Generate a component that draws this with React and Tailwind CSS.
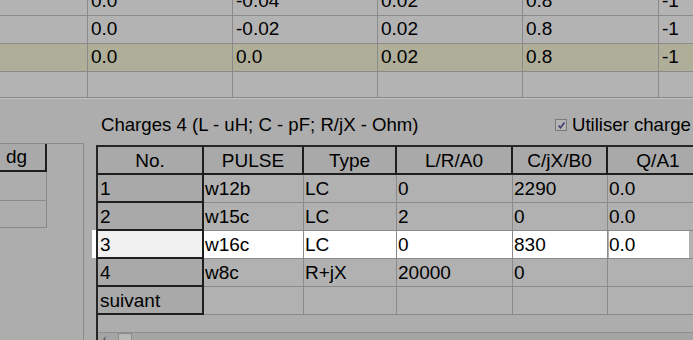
import React from 'react';

const topRows = [
  ['', '0.0', '-0.04', '0.02', '0.8', '-1'],
  ['', '0.0', '-0.02', '0.02', '0.8', '-1'],
  ['', '0.0', '0.0', '0.02', '0.8', '-1'],
  ['', '', '', '', '', ''],
];
const topWidths = ['w-[88px]', 'w-[145px]', 'w-[145px]', 'w-[145px]', 'w-[136px]', 'w-[60px]'];

const cols = [
  { label: 'No.', w: 'w-[106px]' },
  { label: 'PULSE', w: 'w-[100px]' },
  { label: 'Type', w: 'w-[93px]' },
  { label: 'L/R/A0', w: 'w-[116px]' },
  { label: 'C/jX/B0', w: 'w-[95px]' },
  { label: 'Q/A1', w: 'w-[102px]' },
];

const rows = [
  ['1', 'w12b', 'LC', '0', '2290', '0.0'],
  ['2', 'w15c', 'LC', '2', '0', '0.0'],
  ['3', 'w16c', 'LC', '0', '830', '0.0'],
  ['4', 'w8c', 'R+jX', '20000', '0', ''],
  ['suivant', '', '', '', '', ''],
];

function TopTable() {
  return (
    <div className="h-[98px] overflow-hidden bg-[#b3b3b3] border-b border-[#878787]">
      <div className="-mt-[12px]">
        {topRows.map((r, i) => (
          <div
            key={i}
            className={`flex h-[28px] border-b border-[#8a8a8a] ${i === 2 ? 'bg-[#afae98]' : ''}`}
          >
            {r.map((c, j) => (
              <div
                key={j}
                className={`${topWidths[j]} shrink-0 border-r border-[#8a8a8a] pl-[3px] pt-[1px] leading-[24px] text-[19px]`}
              >
                {c}
              </div>
            ))}
          </div>
        ))}
      </div>
    </div>
  );
}

function LeftPanel() {
  return (
    <div className="w-[84px] h-[200px] shrink-0 border-t border-r border-[#8a8a8a]">
      <div className="w-[47px] h-[28px] bg-[#a9a9a9] border-r-2 border-b-2 border-[#1e1e1e] pl-[6px] leading-[26px] text-[19px]">
        dg
      </div>
      <div className="w-[47px] h-[29px] border-r border-b border-[#8a8a8a]" />
      <div className="w-[47px] h-[27px] border-r border-b border-[#8a8a8a]" />
    </div>
  );
}

function ChargeTable() {
  return (
    <div className="relative flex-1 h-[200px] mt-[2px] border-l-2 border-t-2 border-[#262626]">
      <div className="flex h-[28px]">
        {cols.map((c) => (
          <div
            key={c.label}
            className={`${c.w} shrink-0 bg-[#a9a9a9] border-r-2 border-b-2 border-[#1e1e1e] text-center leading-[27px] text-[19px]`}
          >
            {c.label}
          </div>
        ))}
      </div>
      {rows.map((r, i) => {
        const sel = i === 2;
        return (
          <div key={i} className="flex h-[28px]">
            {r.map((c, j) => {
              const fixed = j === 0;
              let bg = fixed ? 'bg-[#a9a9a9]' : 'bg-[#b1b1b1]';
              if (sel) bg = fixed ? 'bg-[#f0f0f0]' : 'bg-white';
              const border = fixed ? 'border-r-2 border-b-2 border-[#1e1e1e]' : 'border-r border-b border-[#8a8a8a]';
              const lastSel = sel && j === 5;
              return (
                <div
                  key={j}
                  className={`${cols[j].w} shrink-0 ${border} ${lastSel ? 'bg-[#b1b1b1]' : bg} ${fixed ? 'pl-[2px]' : 'pl-[1px]'} leading-[27px] text-[19px]`}
                >
                  {lastSel ? <div className="w-[80px] h-full bg-white">{c}</div> : c}
                </div>
              );
            })}
          </div>
        );
      })}
      {/* horizontal scroll bar */}
      <div className="mt-[17px] h-[10px] border-t border-[#8e8e8e] bg-[#a5a5a5] flex items-start">
        <span className="w-[20px] pl-[5px] text-[11px] leading-[10px] text-[#404040]">‹</span>
        <div className="w-[14px] h-[10px] border border-[#8c8c8c] bg-[#b8b8b8]" />
      </div>
    </div>
  );
}

export default function App() {
  return (
    <div className="relative w-[693px] h-[340px] overflow-hidden bg-[#adadad] text-black font-['Liberation_Sans',Arial,sans-serif]">
      <TopTable />
      <div className="h-[1px] bg-[#c3c3c3]" />
      <div className="flex h-[28px] mt-[12px] items-center">
        <div className="w-[555px] shrink-0 pl-[101px] text-[18.6px] leading-[28px] whitespace-nowrap">
          Charges 4 (L - uH; C - pF; R/jX - Ohm)
        </div>
        <div className="flex items-center whitespace-nowrap">
          <span className="w-[12px] h-[12px] shrink-0 border border-[#7a7a7a] bg-[#b4b4b4] flex items-center justify-center mr-[5px]">
            <svg width="9" height="9" viewBox="0 0 9 9">
              <path d="M1.5 4.5 L3.5 6.8 L7.5 1.5" fill="none" stroke="#3b3b6e" strokeWidth="1.6" />
            </svg>
          </span>
          <span className="text-[18.6px] leading-[28px]">Utiliser charge</span>
        </div>
      </div>
      <div className="flex mt-[4px]">
        <LeftPanel />
        <div className="w-[12px] shrink-0" />
        <ChargeTable />
      </div>
      {/* selected row marker left of the grid */}
      <div className="absolute left-[92px] top-[230px] w-[4px] h-[28px] bg-white" />
    </div>
  );
}
